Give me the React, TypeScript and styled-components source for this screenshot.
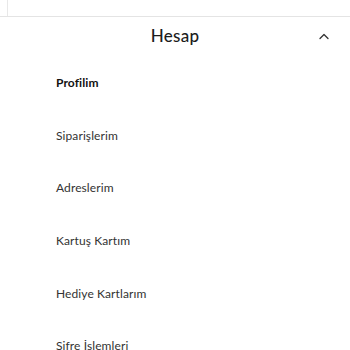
import React from 'react';
import styled, { createGlobalStyle } from 'styled-components';

const Global = createGlobalStyle`
    body {
        margin: 0;
        background: #ffffff;
        font-family: "Lato", "Noto Sans", sans-serif;
        color: #222222;
    }
`;

const items = ['Profilim', 'Siparişlerim', 'Adreslerim', 'Kartuş Kartım', 'Hediye Kartlarım', 'Şifre İşlemleri'];

const App = () => {
    return (
        <Page>
            <Global />
            <TopBar>
                <TopInner />
            </TopBar>
            <Header>
                <Title>Hesap</Title>
                <Toggle>
                    <svg width="10" height="7" viewBox="0 0 10 7" fill="none">
                        <path d="M1 5.5L5 1.5L9 5.5" stroke="#333" strokeWidth="1.3" strokeLinecap="round" strokeLinejoin="round" />
                    </svg>
                </Toggle>
            </Header>
            <Menu>
                {items.map((item, i) => (
                    <Item key={item} active={i === 0}>{item}</Item>
                ))}
            </Menu>
        </Page>
    );
};

const Page = styled.div`
    width: 350px;
    height: 350px;
    overflow: hidden;
`;

const TopBar = styled.div`
    height: 16px;
    border-bottom: 1px solid #e4e4e4;
    padding-left: 7px;
`;

const TopInner = styled.div`
    height: 100%;
    border-left: 1px solid #e8e8e8;
`;

const Header = styled.div`
    position: relative;
    height: 40px;
    display: flex;
    align-items: center;
    justify-content: center;
`;

const Title = styled.div`
    font-size: 17px;
    font-weight: 500;
    color: #1c1c1c;
    letter-spacing: 0.3px;
    margin-top: -4px;
`;

const Toggle = styled.div`
    position: absolute;
    right: 21px;
    top: 16px;
    display: flex;
`;

const Menu = styled.div`
    display: flex;
    flex-direction: column;
    padding: 17px 0 0 56px;
`;

const Item = styled.div<{ active?: boolean }>`
    height: 52.7px;
    flex-shrink: 0;
    line-height: 16px;
    font-size: 12px;
    letter-spacing: 0.1px;
    font-weight: ${p => (p.active ? 700 : 400)};
    color: ${p => (p.active ? '#111111' : '#333333')};
    padding-top: 1px;
    box-sizing: border-box;
`;

export default App;
